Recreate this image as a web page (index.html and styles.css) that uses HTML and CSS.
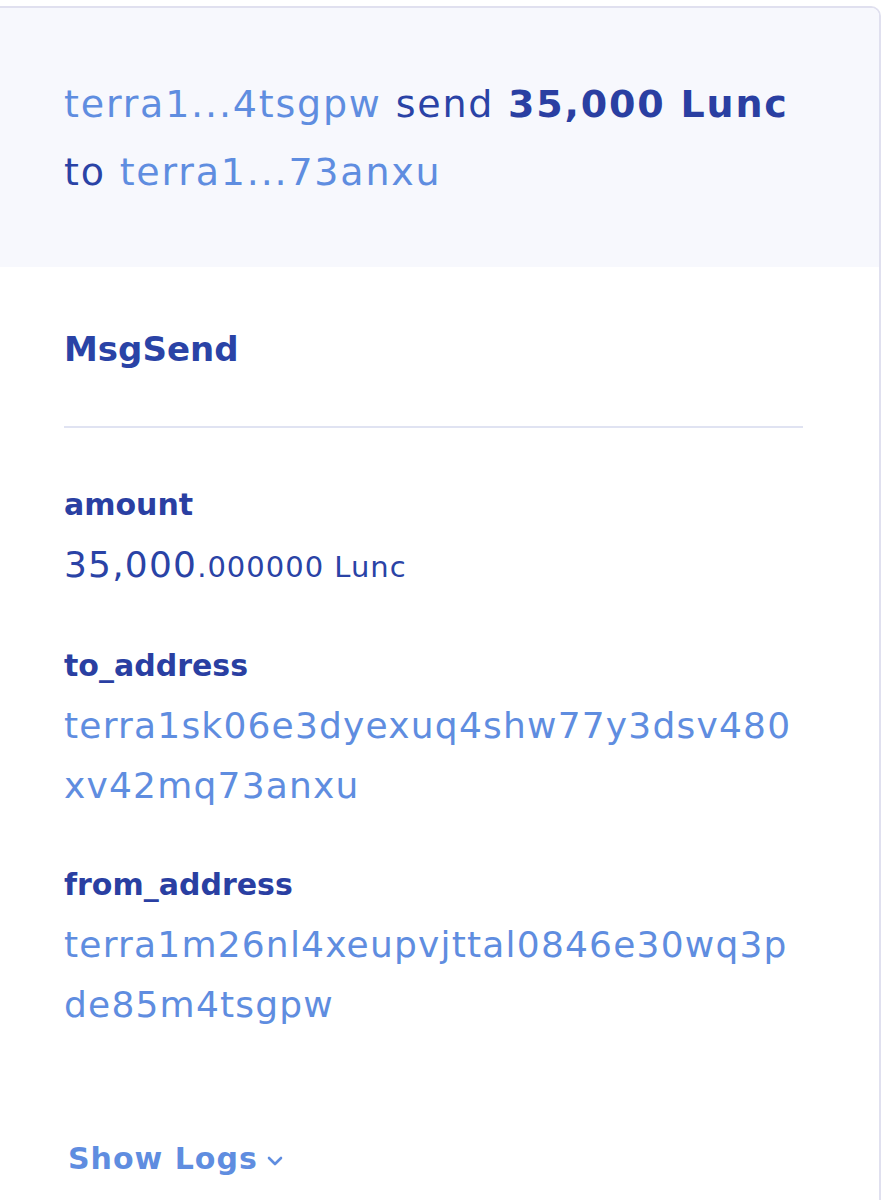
FILE: index.html
```html
<!DOCTYPE html>
<html>
<head>
<meta charset="utf-8">
<link rel="stylesheet" href="styles.css">
</head>
<body>
<div class="card">
  <div class="summary">
    <p class="summary-text"><a class="addr">terra1...4tsgpw</a> send <strong>35,000 Lunc</strong> to <a class="addr">terra1...73anxu</a></p>
  </div>
  <div class="body">
    <h2 class="msg-title">MsgSend</h2>
    <div class="divider"></div>
    <dl class="fields">
      <div class="field">
        <dt>amount</dt>
        <dd class="amount"><span class="int">35,000</span><span class="dec">.000000 Lunc</span></dd>
      </div>
      <div class="field">
        <dt>to_address</dt>
        <dd><a class="addr long">terra1sk06e3dyexuq4shw77y3dsv480xv42mq73anxu</a></dd>
      </div>
      <div class="field">
        <dt>from_address</dt>
        <dd><a class="addr long">terra1m26nl4xeupvjttal0846e30wq3pde85m4tsgpw</a></dd>
      </div>
    </dl>
    <button class="show-logs">Show Logs
      <svg class="chev" width="18" height="12" viewBox="0 0 18 12"><path d="M3 3 L9 9 L15 3" fill="none" stroke="currentColor" stroke-width="2.6" stroke-linecap="round" stroke-linejoin="round"/></svg>
    </button>
  </div>
</div>
</body>
</html>
```
FILE: styles.css
```css
html, body {
  margin: 0;
  padding: 0;
  background: #ffffff;
}
body {
  font-family: "DejaVu Sans", "Open Sans", sans-serif;
  color: #2a43a6;
  overflow: hidden;
  height: 1200px;
}
.card {
  margin: 6px 6px 0 -20px;
  height: 1300px;
  border: 2px solid #e0e0ef;
  border-radius: 10px;
  background: #ffffff;
  overflow: hidden;
  box-sizing: border-box;
}
.summary {
  background: #f7f8fd;
  height: 259px;
  padding: 62px 60px 0 82px;
  box-sizing: border-box;
}
.summary-text {
  margin: 0;
  font-size: 38px;
  letter-spacing: 1.8px;
  line-height: 68px;
  color: #2a43a6;
}
.summary-text strong {
  font-weight: 700;
  color: #2a3fa2;
}
.addr {
  color: #5f8de0;
  text-decoration: none;
}
.body {
  padding: 0 76px 0 82px;
}
.msg-title {
  margin: 0;
  padding-top: 60px;
  font-size: 34px;
  line-height: 44px;
  font-weight: 700;
  color: #2a43a6;
}
.divider {
  height: 2px;
  background: #e0e3f2;
  margin-top: 55px;
}
.fields {
  margin: 0;
  padding-top: 52px;
  display: flex;
  flex-direction: column;
  gap: 44px;
}
.field dt {
  font-size: 30px;
  font-weight: 700;
  line-height: 50px;
  margin-bottom: 5px;
  color: #2a3fa2;
}
.field dd {
  margin: 0;
  font-size: 36px;
  letter-spacing: 1.2px;
  line-height: 60px;
}
.amount .int {
  font-size: 36px;
  color: #2a43a6;
}
.amount .dec {
  font-size: 29px;
  letter-spacing: 1px;
  color: #2a43a6;
}
.addr.long {
  word-break: break-all;
}
.show-logs {
  margin-top: 106px;
  margin-left: 4px;
  padding: 0;
  border: 0;
  background: none;
  font-family: inherit;
  font-size: 30px;
  letter-spacing: 1px;
  font-weight: 700;
  color: #5f8de0;
  display: flex;
  align-items: center;
  gap: 8px;
}
.chev {
  margin-top: 4px;
}
```
